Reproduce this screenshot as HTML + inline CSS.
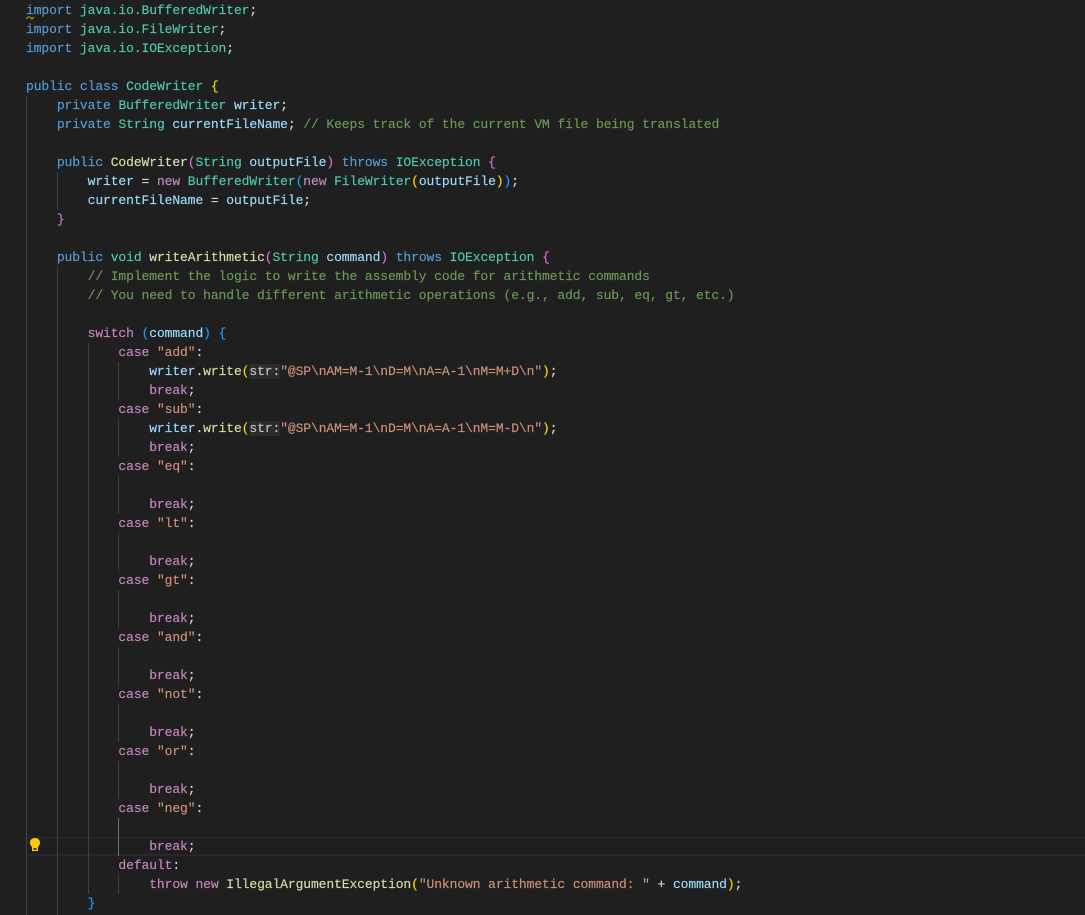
<!DOCTYPE html>
<html>
<head>
<meta charset="utf-8">
<style>
html,body{margin:0;padding:0;background:#1f1f1f;width:1085px;height:915px;overflow:hidden}
#code{position:absolute;left:26px;top:1px;margin:0;font:13px/19px "Liberation Mono",monospace;letter-spacing:-0.1px;-webkit-text-stroke:0.15px;color:#d4d4d4;white-space:pre;z-index:2}
.g{position:absolute;width:1px;background:#404040;z-index:1}
.k{color:#569cd6}.c{color:#c586c0}.t{color:#4ec9b0}.v{color:#9cdcfe}.f{color:#dcdcaa}.s{color:#ce9178}.m{color:#6a9955}
.y{color:#ffd700}.p{color:#da70d6}.b{color:#179fff}
.h{background:#2b2b2b;color:#c4c4c4}
#cur{position:absolute;left:26px;right:0;top:837px;height:15px;border-top:2px solid #282828;border-bottom:2px solid #282828;z-index:0}
#sq{position:absolute;left:26px;top:16px;z-index:3}
#bulb{position:absolute;left:29px;top:837px;z-index:3}
</style>
</head>
<body>
<div id="cur"></div>
<div class="g" style="left:26px;top:96px;height:819px"></div>
<div class="g" style="left:57px;top:172px;height:38px"></div>
<div class="g" style="left:57px;top:267px;height:648px"></div>
<div class="g" style="left:88px;top:343px;height:551px"></div>
<div class="g" style="left:118px;top:362px;height:38px"></div>
<div class="g" style="left:118px;top:419px;height:38px"></div>
<div class="g" style="left:118px;top:476px;height:38px"></div>
<div class="g" style="left:118px;top:533px;height:38px"></div>
<div class="g" style="left:118px;top:590px;height:38px"></div>
<div class="g" style="left:118px;top:647px;height:38px"></div>
<div class="g" style="left:118px;top:704px;height:38px"></div>
<div class="g" style="left:118px;top:761px;height:38px"></div>
<div class="g" style="left:118px;top:818px;height:38px;background:#707070"></div>
<div class="g" style="left:118px;top:875px;height:19px"></div>
<svg id="sq" width="10" height="4" viewBox="0 0 10 4"><path d="M0 3 L2 1 L4 1 L6 3 L8 1" fill="none" stroke="#cca700" stroke-width="1"/></svg>
<svg id="bulb" width="12" height="16" viewBox="0 0 12 16"><path d="M6 1C3 1 1 3 1 5.8C1 8 2.4 9 3 10.5V14H9V10.5C9.600 9 11 8 11 5.800C11 3 9 1 6 1Z" fill="#ffcc00"/><rect x="4.500" y="11" width="3" height="2" fill="#3a3a1a"/></svg>
<pre id="code"><span class="k">import</span> <span class="t">java.io.BufferedWriter</span>;
<span class="k">import</span> <span class="t">java.io.FileWriter</span>;
<span class="k">import</span> <span class="t">java.io.IOException</span>;

<span class="k">public</span> <span class="k">class</span> <span class="t">CodeWriter</span> <span class="y">{</span>
    <span class="k">private</span> <span class="t">BufferedWriter</span> <span class="v">writer</span>;
    <span class="k">private</span> <span class="t">String</span> <span class="v">currentFileName</span>; <span class="m">// Keeps track of the current VM file being translated</span>

    <span class="k">public</span> <span class="f">CodeWriter</span><span class="p">(</span><span class="t">String</span> <span class="v">outputFile</span><span class="p">)</span> <span class="k">throws</span> <span class="t">IOException</span> <span class="p">{</span>
        <span class="v">writer</span> = <span class="c">new</span> <span class="t">BufferedWriter</span><span class="b">(</span><span class="c">new</span> <span class="t">FileWriter</span><span class="y">(</span><span class="v">outputFile</span><span class="y">)</span><span class="b">)</span>;
        <span class="v">currentFileName</span> = <span class="v">outputFile</span>;
    <span class="p">}</span>

    <span class="k">public</span> <span class="t">void</span> <span class="f">writeArithmetic</span><span class="p">(</span><span class="t">String</span> <span class="v">command</span><span class="p">)</span> <span class="k">throws</span> <span class="t">IOException</span> <span class="p">{</span>
        <span class="m">// Implement the logic to write the assembly code for arithmetic commands</span>
        <span class="m">// You need to handle different arithmetic operations (e.g., add, sub, eq, gt, etc.)</span>

        <span class="c">switch</span> <span class="b">(</span><span class="v">command</span><span class="b">)</span> <span class="b">{</span>
            <span class="c">case</span> <span class="s">"add"</span>:
                <span class="v">writer</span>.<span class="f">write</span><span class="y">(</span><span class="h">str:</span><span class="s">"@SP\nAM=M-1\nD=M\nA=A-1\nM=M+D\n"</span><span class="y">)</span>;
                <span class="c">break</span>;
            <span class="c">case</span> <span class="s">"sub"</span>:
                <span class="v">writer</span>.<span class="f">write</span><span class="y">(</span><span class="h">str:</span><span class="s">"@SP\nAM=M-1\nD=M\nA=A-1\nM=M-D\n"</span><span class="y">)</span>;
                <span class="c">break</span>;
            <span class="c">case</span> <span class="s">"eq"</span>:

                <span class="c">break</span>;
            <span class="c">case</span> <span class="s">"lt"</span>:

                <span class="c">break</span>;
            <span class="c">case</span> <span class="s">"gt"</span>:

                <span class="c">break</span>;
            <span class="c">case</span> <span class="s">"and"</span>:

                <span class="c">break</span>;
            <span class="c">case</span> <span class="s">"not"</span>:

                <span class="c">break</span>;
            <span class="c">case</span> <span class="s">"or"</span>:

                <span class="c">break</span>;
            <span class="c">case</span> <span class="s">"neg"</span>:

                <span class="c">break</span>;
            <span class="c">default</span>:
                <span class="c">throw</span> <span class="c">new</span> <span class="f">IllegalArgumentException</span><span class="y">(</span><span class="s">"Unknown arithmetic command: "</span> + <span class="v">command</span><span class="y">)</span>;
        <span class="b">}</span></pre>
</body>
</html>
